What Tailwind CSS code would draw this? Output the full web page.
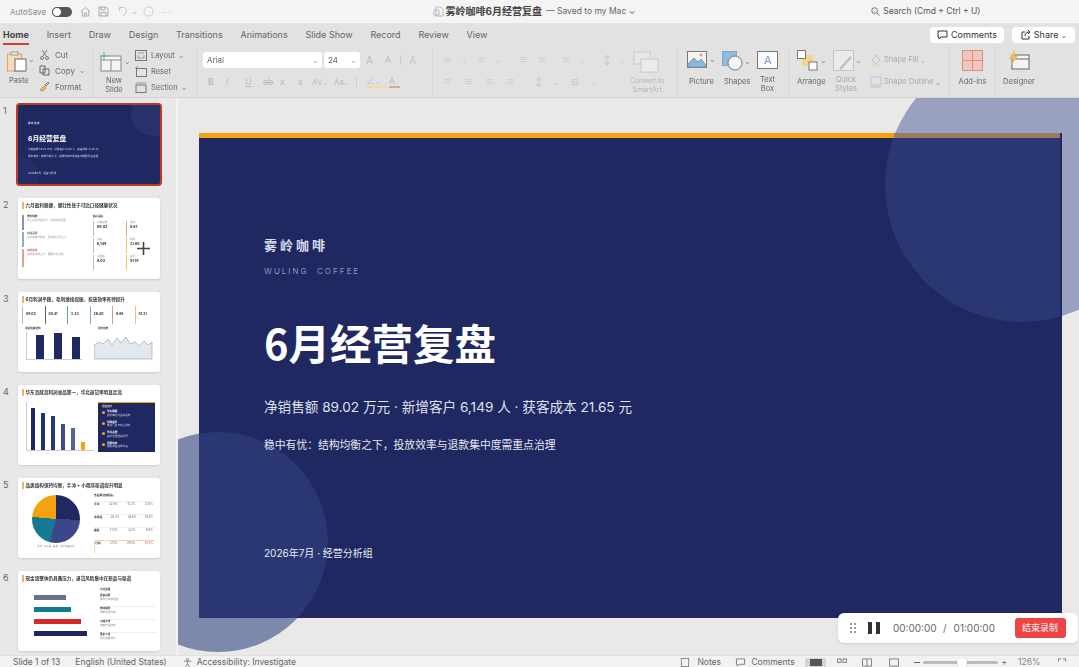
<!DOCTYPE html>
<html lang="zh-CN">
<head>
  <meta charset="UTF-8" />
  <title>雾岭咖啡6月经营复盘</title>
  <script src="https://cdn.jsdelivr.net/npm/@tailwindcss/browser@4"></script>
</head>
<body class="h-[667px] overflow-hidden bg-[#e9e9e8] text-[#444] [font-family:Inter,'Noto_Sans_CJK_SC',sans-serif]">

  <!-- Title bar -->
  <header class="h-[23px] bg-[#f4f4f4] flex items-center text-[9px] relative">
    <span class="ml-[10px] w-[42px] text-[#888] text-[8px]">AutoSave</span>
    <span class="w-[20px] h-[10px] rounded-full bg-[#555] relative"><span class="absolute left-0 top-0 w-[10px] h-[10px] rounded-full bg-white border border-[#555]"></span></span>
    <svg class="ml-[8px]" width="11" height="11" viewBox="0 0 12 12" fill="none" stroke="#aaa"><path d="M1 6 6 1.5 11 6M2.5 5v6h7V5M5 11V7.5h2V11"/></svg>
    <svg class="ml-[7px]" width="11" height="11" viewBox="0 0 11 11" fill="none" stroke="#aaa"><path d="M1 1h7l2 2v7H1zM3 1v3h4V1M3 10V6.5h5V10"/></svg>
    <svg class="ml-[9px]" width="11" height="11" viewBox="0 0 11 11" fill="none" stroke="#c4c4c4"><path d="M1 2c4-2 9 0 7 5l-3 3M1 2l1 3.5M1 2l3.5-.5"/></svg>
    <span class="ml-[3px] text-[#999] text-[6px]">⌄</span>
    <svg class="ml-[6px]" width="11" height="11" viewBox="0 0 11 11" fill="none" stroke="#ccc"><circle cx="5.5" cy="5.5" r="4.5"/><path d="M7 1.5 9 .5"/></svg>
    <span class="ml-[8px] text-[#aaa] tracking-[1px] text-[8px] leading-none">···</span>
    <div class="ml-[261px] flex items-center text-[#555]">
      <svg width="11" height="11" viewBox="0 0 11 11" fill="none" stroke="#bbb"><path d="M3 1h5l2 2v7H3zM1 4h5v5H1z"/></svg>
      <span class="ml-[2px] font-bold text-[#444] text-[10px]">雾岭咖啡6月经营复盘</span>
      <span class="ml-[4px] text-[8.5px] text-[#666]">— Saved to my Mac ⌄</span>
    </div>
    <div class="ml-[236px] flex items-center gap-[3px] text-[#555] text-[8.5px]">
      <svg width="9" height="9" viewBox="0 0 10 10" fill="none" stroke="#666"><circle cx="4" cy="4" r="3.2"/><path d="m6.5 6.5 3 3"/></svg>
      <span>Search (Cmd + Ctrl + U)</span>
    </div>
  </header>

  <!-- Tabs -->
  <nav class="h-[24px] bg-[#e2e2e2] flex items-center pl-[3px] pr-[4px] gap-[17.8px] text-[9px] text-[#666]">
    <span class="relative font-bold text-[#444]">Home<span class="absolute left-0 right-0 top-[15px] h-[2px] bg-[#c8442c]"></span></span>
    <span>Insert</span><span>Draw</span><span>Design</span><span>Transitions</span><span>Animations</span><span>Slide Show</span><span>Record</span><span>Review</span><span>View</span>
    <button class="ml-auto w-[74px] h-[16px] rounded-[4px] bg-white flex items-center justify-center gap-[3px] text-[#333] text-[9px]">
      <svg width="11" height="10" viewBox="0 0 11 10" fill="none" stroke="#333"><path d="M1 1h9v6H4L2 9V7H1z"/></svg>Comments
    </button>
    <button class="ml-[-9.8px] w-[63px] h-[16px] rounded-[4px] bg-white flex items-center justify-center gap-[3px] text-[#333] text-[9px]">
      <svg width="10" height="10" viewBox="0 0 10 10" fill="none" stroke="#333"><path d="M4 2H1v7h7V6M4 6c0-3 2-4 5-4M7 0l2 2-2 2"/></svg>Share <span class="text-[6px]">⌄</span>
    </button>
  </nav>

  <!-- Ribbon -->
  <section class="h-[51px] bg-[#e2e2e2] border-b border-[#d4d4d4] flex text-[7.5px] text-[#666] blur-[0.3px]">
    <!-- Clipboard -->
    <div class="w-[93px] border-r border-[#d6d6d6] flex pl-[7px] pt-[4px]">
      <div class="w-[32px] flex flex-col">
        <div class="flex items-start">
          <svg width="20" height="21" viewBox="0 0 20 21" fill="none"><rect x="0.5" y="3" width="14" height="17" fill="#f6dcb8" stroke="#d9a56a"/><rect x="8" y="8" width="11" height="12" fill="#fff" stroke="#666"/><rect x="4" y="1" width="7" height="3" fill="#eee" stroke="#999"/></svg>
          <span class="ml-[2px] mt-[4px] text-[6px]">⌄</span>
        </div>
        <span class="mt-[3px] ml-[2px]">Paste</span>
      </div>
      <div class="flex flex-col gap-[5px] -mt-[2px] text-[8px]">
        <div class="flex items-center gap-[5px] h-[11px]"><svg width="11" height="11" viewBox="0 0 11 11" fill="none" stroke="#777"><path d="M3 1l4 6M8 1 4 7"/><circle cx="3" cy="9" r="1.5"/><circle cx="8" cy="9" r="1.5"/></svg>Cut</div>
        <div class="flex items-center gap-[5px] h-[11px]"><svg width="11" height="11" viewBox="0 0 11 11" fill="none" stroke="#666"><path d="M1 1h5v7H1zM4 4h6v6H4z" /></svg>Copy <span class="text-[6px]">⌄</span></div>
        <div class="flex items-center gap-[5px] h-[11px]"><svg width="11" height="11" viewBox="0 0 11 11" fill="none"><path d="M1 9 5 5l2 2-3 3z" fill="#eeb877" stroke="#d58a3c"/><path d="m6 4 3-3 1 1-3 3z" stroke="#777"/></svg>Format</div>
      </div>
    </div>
    <!-- Slides -->
    <div class="w-[104px] border-r border-[#d6d6d6] flex pl-[7px] pt-[4px]">
      <div class="w-[35px] flex flex-col">
        <div class="flex items-start">
          <svg width="22" height="21" viewBox="0 0 22 21" fill="none" stroke="#888"><rect x="1" y="5" width="20" height="15" fill="#f4f4f4"/><path d="M1 9h20M11 9v11"/><path d="M4 1v8M0 5h8" stroke="#6fae7d"/></svg>
          <span class="ml-[3px] mt-[6px] text-[6px]">⌄</span>
        </div>
        <span class="mt-[5px] w-[28px] text-center leading-[8.5px]">New<br />Slide</span>
      </div>
      <div class="flex flex-col gap-[5px] -mt-[1px] text-[7.5px]">
        <div class="flex items-center gap-[4px] h-[11px]"><svg width="12" height="11" viewBox="0 0 12 11" fill="none" stroke="#777"><rect x="0.5" y="0.5" width="11" height="10" /><path d="M3 3h6M3 5v3h6V5" stroke="#999"/></svg>Layout <span class="text-[6px]">⌄</span></div>
        <div class="flex items-center gap-[4px] h-[11px]"><svg width="12" height="11" viewBox="0 0 12 11" fill="none" stroke="#777"><rect x="1.5" y="2.5" width="10" height="8"/><path d="M0 3 2 .5 4 3" stroke="#6fae7d"/></svg>Reset</div>
        <div class="flex items-center gap-[4px] h-[11px]"><svg width="12" height="11" viewBox="0 0 12 11" fill="none" stroke="#777"><rect x="1" y="3" width="10" height="7.5"/><path d="M1 1h10" stroke="#6fae7d" /></svg>Section <span class="text-[6px]">⌄</span></div>
      </div>
    </div>
    <!-- Font -->
    <div class="w-[236px] border-r border-[#d6d6d6] pl-[6px] pt-[5px] text-[#aaa]">
      <div class="flex items-center h-[16px]">
        <div class="w-[119px] h-[16px] bg-white rounded-[3px] flex items-center justify-between px-[4px] text-[#666] text-[8px]">Arial<span class="text-[6px] text-[#888]">⌄</span></div>
        <div class="ml-[2px] w-[36px] h-[16px] bg-white rounded-[3px] flex items-center justify-between px-[4px] text-[#666] text-[8px]">24<span class="text-[6px] text-[#888]">⌄</span></div>
        <span class="ml-[6px] text-[10px] text-[#bbb]">A</span>
        <span class="ml-[12px] text-[9px] text-[#bbb]">A</span>
        <span class="ml-[9px] w-px h-[10px] bg-[#ccc]"></span>
        <span class="ml-[8px] text-[10px] text-[#c4c4c4]">A</span>
      </div>
      <div class="mt-[7px] flex items-center h-[14px] text-[9px] text-[#bbb]">
        <span class="ml-[5px] w-[18px] font-bold">B</span>
        <span class="w-[19px] italic">I</span>
        <span class="w-[18px] underline">U</span>
        <span class="w-[17px] line-through">ab</span>
        <span class="w-[18px]">x</span>
        <span class="w-[14px]">x</span>
        <span class="w-[22px] text-[8px]">AV<span class="text-[6px]">⌄</span></span>
        <span class="w-[22px] text-[8px]">Aa<span class="text-[6px]">⌄</span></span>
        <span class="w-px h-[10px] bg-[#ccc]"></span>
        <span class="ml-[9px] w-[21px] border-b-2 border-[#f0dc9c] h-[12px] leading-[10px]">∠<span class="text-[6px]">⌄</span></span>
        <span class="ml-[2px] w-[11px] border-b-2 border-[#e4a0a0] h-[12px] leading-[10px]">A</span>
      </div>
    </div>
    <!-- Paragraph -->
    <div class="w-[245px] border-r border-[#d6d6d6] flex pl-[10px] pt-[6px] text-[#c0c0c0]">
      <div class="w-[188px]">
        <div class="flex items-center h-[14px] gap-[10px] text-[9px]">
          <span>≡</span><span class="text-[6px]">⌄</span><span>≡</span><span class="text-[6px]">⌄</span><span class="ml-[8px]">≡</span><span>≡</span><span class="ml-[5px]">≡</span><span class="text-[6px]">⌄</span><span class="ml-[8px]">↕</span><span class="text-[6px]">⌄</span>
        </div>
        <div class="mt-[8px] flex items-center h-[14px] gap-[12px] text-[9px]">
          <span>≡</span><span>≡</span><span>≡</span><span>≡</span><span class="ml-[8px]">↕</span><span class="text-[6px]">⌄</span><span>⊟</span><span class="text-[6px]">⌄</span>
        </div>
      </div>
      <div class="flex flex-col items-center w-[36px] -ml-[2px] -mt-[2px] text-[7px] text-[#b4b4b4]">
        <svg width="28" height="22" viewBox="0 0 28 22" fill="none" stroke="#c8c8c8"><rect x="1" y="1" width="16" height="12" fill="#e8e8e8"/><rect x="8" y="8" width="17" height="13" fill="#ececec"/></svg>
        <span class="mt-[4px] text-center leading-[8.5px] whitespace-nowrap">Convert to<br />SmartArt</span>
      </div>
    </div>
    <!-- Insert -->
    <div class="w-[111px] border-r border-[#d6d6d6] flex pl-[9px] pt-[4px]">
      <div class="w-[35px] flex flex-col">
        <div class="flex items-center gap-[3px]">
          <svg width="20" height="17" viewBox="0 0 20 17" fill="none" stroke="#777"><rect x="0.5" y="0.5" width="19" height="16" fill="#f4f4f4"/><path d="M1 13 7 7l4 4 3-3 5 6v2H1z" fill="#8cb8d8" stroke="#6a9cc0"/><circle cx="14" cy="4" r="1.4" fill="#e9967a" stroke="none"/></svg>
          <span class="text-[6px]">⌄</span>
        </div>
        <span class="mt-[8px] ml-[2px]">Picture</span>
      </div>
      <div class="w-[35px] flex flex-col">
        <div class="flex items-center gap-[2px]">
          <svg width="21" height="20" viewBox="0 0 21 20" fill="none"><rect x="0.5" y="0.5" width="14" height="14" fill="#8fbce0" stroke="#7aa8cc"/><circle cx="13" cy="12" r="7" fill="#f6f6f6" stroke="#777"/></svg>
          <span class="text-[6px]">⌄</span>
        </div>
        <span class="mt-[5px] ml-[2px]">Shapes</span>
      </div>
      <div class="flex flex-col">
        <svg width="21" height="18" viewBox="0 0 21 18" fill="none" stroke="#777"><rect x="0.5" y="0.5" width="20" height="17" fill="#fafafa"/><text x="7" y="13" fill="#6d9fc9" stroke="none" font-size="11">A</text></svg>
        <span class="mt-[7px] leading-[8.5px] text-center">Text<br />Box</span>
      </div>
    </div>
    <!-- Drawing -->
    <div class="w-[161px] border-r border-[#d6d6d6] flex pl-[8px] pt-[3px]">
      <div class="w-[36px] flex flex-col">
        <div class="flex items-center gap-[3px]">
          <svg width="21" height="21" viewBox="0 0 21 21" fill="none" stroke="#777"><rect x="5" y="5" width="11" height="11" fill="#f6d48c" stroke="none"/><rect x="0.5" y="0.5" width="8" height="8" fill="#fff"/><rect x="12" y="12" width="8" height="8" fill="#fff"/></svg>
          <span class="text-[6px]">⌄</span>
        </div>
        <span class="mt-[5px]">Arrange</span>
      </div>
      <div class="w-[37px] flex flex-col text-[#a8a8a8]">
        <div class="flex items-center gap-[2px]">
          <svg width="21" height="21" viewBox="0 0 21 21" fill="none" stroke="#c4c4c4"><rect x="0.5" y="0.5" width="20" height="20" fill="#ebebeb"/><path d="M7 19 18 7" stroke="#bbb" stroke-width="2"/></svg>
          <span class="text-[6px] text-[#777]">⌄</span>
        </div>
        <span class="mt-[5px] ml-[2px] leading-[8.5px] text-center w-[22px]">Quick<br />Styles</span>
      </div>
      <div class="flex flex-col gap-[10px] pt-[4px] text-[#a8a8a8]">
        <div class="flex items-center gap-[2px] h-[12px]"><svg width="12" height="12" viewBox="0 0 12 12" fill="none" stroke="#c4c4c4"><path d="M6 1 2 7l4 3 4-4z"/><path d="M1 11h10" stroke="#e8d0a0"/></svg>Shape Fill <span class="text-[6px]">⌄</span></div>
        <div class="flex items-center gap-[2px] h-[12px]"><svg width="12" height="12" viewBox="0 0 12 12" fill="none" stroke="#c4c4c4"><rect x="1" y="1" width="10" height="8"/><path d="M1 11h10" stroke="#b0c4dc"/></svg>Shape Outline <span class="text-[6px] text-[#777]">⌄</span></div>
      </div>
    </div>
    <!-- Add-ins -->
    <div class="w-[46px] border-r border-[#d6d6d6] flex flex-col items-center pt-[3px]">
      <svg width="21" height="21" viewBox="0 0 21 21" fill="#f2c8be" stroke="#e08f7f"><rect x="0.5" y="0.5" width="20" height="20"/><path d="M10.5 0v21M0 10.5h21" /></svg>
      <span class="mt-[5px]">Add-ins</span>
    </div>
    <!-- Designer -->
    <div class="w-[46px] flex flex-col items-center pt-[2px]">
      <svg width="22" height="22" viewBox="0 0 22 22" fill="none"><rect x="4" y="6" width="17" height="14" fill="#f4f4f4" stroke="#666"/><path d="M4 10h17" stroke="#666"/><path d="M7 0 1 10h4l-2 7 7-10H6z" fill="#f0bc5e"/></svg>
      <span class="mt-[5px]">Designer</span>
    </div>
  </section>

  <!-- Workspace -->
  <main class="h-[557px] flex overflow-hidden">
    <!-- Slide thumbnails -->
    <aside class="w-[178px] h-full shrink-0 bg-[#e8e8e8] border-r-[2px] border-[#f3f3f3] flex flex-col pt-[6px] gap-[13px] text-[#666] text-[9px]">
      <!-- 1 -->
      <div class="flex h-[81px]">
        <span class="w-[16px] pl-[3px]">1</span>
        <div class="relative w-[146px] h-[83px] -mt-[1px] rounded-[4px] border-[2px] border-[#bd3a22] bg-[#1f2860] overflow-hidden pl-[10px] pt-[17px] text-white blur-[0.3px]">
          <div class="absolute left-[113px] top-[-14px] w-[45px] h-[45px] rounded-full bg-[#28336e]"></div>
          <div class="absolute -left-[15px] bottom-[-10px] w-[36px] h-[36px] rounded-full bg-[#232e68]"></div>
          <div class="relative text-[2.5px] font-bold text-[#c8cee4] tracking-[0.5px]">雾岭咖啡</div>
          <div class="relative mt-[8px] text-[6.8px] leading-[9px] font-bold">6月经营复盘</div>
          <div class="relative mt-[4px] text-[2.6px] leading-[4px] text-[#d8dcec] whitespace-nowrap">净销售额 89.02 万元 · 新增客户 6,149 人 · 获客成本 21.65 元</div>
          <div class="relative mt-[3px] text-[2.6px] leading-[4px] text-[#d8dcec] whitespace-nowrap">稳中有忧：结构均衡之下，投放效率与退款集中度需重点治理</div>
          <div class="relative mt-[13px] text-[2.6px] leading-[4px] text-[#d8dcec]">2026年7月 · 经营分析组</div>
        </div>
      </div>
      <!-- 2 -->
      <div class="flex h-[80.5px]">
        <span class="w-[18px] pl-[3px]">2</span>
        <div class="relative w-[142px] h-[80.5px] rounded-[3px] bg-white shadow-sm overflow-hidden">
          <div class="blur-[0.3px]">
            <div class="flex items-center gap-[2px] pl-[4px] pt-[4px]"><span class="w-[1.5px] h-[7px] bg-[#f0b458]"></span><span class="text-[4.6px] leading-[7px] font-bold text-[#333]">六月盈利稳健，健壮性处于可比口径健康状况</span></div>
            <div class="flex pl-[4px] pt-[6px]">
              <div class="w-[65px] flex flex-col gap-[2px]">
                <div class="h-[15px] border-l-[2px] border-[#8d92b0] pl-[3px] text-[2.6px] text-[#999]"><b class="text-[#333]">增长结构</b><br />线上占比持续提升，投放效率回落</div>
                <div class="h-[15px] border-l-[2px] border-[#8ab0c8] pl-[3px] text-[2.6px] text-[#999]"><b class="text-[#3a6f94]">利润表现</b><br />毛利率维持稳定，费用率小幅上升</div>
                <div class="h-[18px] border-l-[2px] border-[#ea9c94] pl-[3px] text-[2.6px] text-[#999]"><b class="text-[#c84a3c]">风险信号</b><br />退款集中度上升，需要重点治理</div>
              </div>
              <div class="ml-[6px]">
                <div class="text-[2.6px] font-bold text-[#333]">核心指标</div>
                <div class="mt-[2px] grid grid-cols-[29px_29px] gap-x-[4px] gap-y-[2px] text-[2.6px] text-[#999]">
                  <div class="h-[15px] border-l-[1.5px] border-[#bbb] pl-[3px]">净销售额<br /><b class="text-[3.6px] text-[#333]">89.02</b></div>
                  <div class="h-[15px] border-l-[1.5px] border-[#ee9c94] pl-[3px]">退款<br /><b class="text-[3.6px] text-[#333]">8.61</b></div>
                  <div class="h-[15px] border-l-[1.5px] border-[#bbb] pl-[3px]">新客<br /><b class="text-[3.6px] text-[#333]">6,149</b></div>
                  <div class="h-[15px] border-l-[1.5px] border-[#f2c468] pl-[3px]">成本<br /><b class="text-[3.6px] text-[#333]">21.65</b></div>
                  <div class="h-[15px] border-l-[1.5px] border-[#bbb] pl-[3px]">复购率<br /><b class="text-[3.6px] text-[#333]">8.03</b></div>
                  <div class="h-[15px] border-l-[1.5px] border-[#f2c468] pl-[3px]">客单<br /><b class="text-[3.6px] text-[#333]">51.15</b></div>
                </div>
              </div>
            </div>
          </div>
          <svg class="absolute left-[119px] top-[44px]" width="13" height="13" viewBox="0 0 13 13" stroke="#444"><path d="M6.5 0v13M0 6.5h13" stroke-width="1.6"/></svg>
        </div>
      </div>
      <!-- 3 -->
      <div class="flex h-[80px]">
        <span class="w-[18px] pl-[3px]">3</span>
        <div class="w-[142px] h-[80px] rounded-[3px] bg-white shadow-sm overflow-hidden blur-[0.3px]">
          <div class="flex items-center gap-[2px] pl-[4px] pt-[4px]"><span class="w-[1.5px] h-[7px] bg-[#f0b458]"></span><span class="text-[4.6px] leading-[7px] font-bold text-[#333]">6月利润平稳，毛利继续提振，投放效率有待提升</span></div>
          <div class="flex gap-[2.5px] pl-[4px] pt-[3px] text-[3.4px] font-bold text-[#333]">
            <div class="w-[20px] h-[18px] border-l-[1.5px] border-[#bbb] pl-[3px] pt-[6px]">89.02</div>
            <div class="w-[20px] h-[18px] border-l-[1.5px] border-[#666] pl-[3px] pt-[6px]">58.41</div>
            <div class="w-[20px] h-[18px] border-l-[1.5px] border-[#5a9fac] pl-[3px] pt-[6px]">2.33</div>
            <div class="w-[20px] h-[18px] border-l-[1.5px] border-[#7fb0c4] pl-[3px] pt-[6px]">26.40</div>
            <div class="w-[20px] h-[18px] border-l-[1.5px] border-[#ee908a] pl-[3px] pt-[6px]">6.68</div>
            <div class="w-[20px] h-[18px] border-l-[1.5px] border-[#f0c26c] pl-[3px] pt-[6px]">51.21</div>
          </div>
          <div class="flex pl-[7px] pt-[2px] text-[2.6px] font-bold text-[#444] leading-[4px]">
            <div class="w-[60px]">净销售额结构</div>
            <div class="ml-[13px]">周度趋势</div>
          </div>
          <div class="flex pl-[8px] pt-[2px]">
            <div class="w-[56px] h-[28px] border-l border-b border-[#ccc] flex items-end pl-[9px] gap-[10px]">
              <span class="w-[8px] h-[24px] bg-[#1f2860]"></span><span class="w-[8px] h-[26px] bg-[#1f2860]"></span><span class="w-[8px] h-[22px] bg-[#1f2860]"></span>
            </div>
            <svg class="ml-[12px]" width="62" height="28" viewBox="0 0 62 28"><path d="M0 27V13l5-3 4 2 5-5 4 6 5-7 4 5 5-6 4 7 5-2 4 4 5-5 4 4 4-3v17z" fill="#e3e7ee" stroke="#8e9ab4" stroke-width="0.6"/></svg>
          </div>
        </div>
      </div>
      <!-- 4 -->
      <div class="flex h-[80px]">
        <span class="w-[18px] pl-[3px]">4</span>
        <div class="w-[142px] h-[80px] rounded-[3px] bg-white shadow-sm overflow-hidden blur-[0.3px]">
          <div class="flex items-center gap-[2px] pl-[4px] pt-[4px]"><span class="w-[1.5px] h-[7px] bg-[#f0b458]"></span><span class="text-[4.6px] leading-[7px] font-bold text-[#333]">华东贡献高利润单品第一，华北退货率明显走高</span></div>
          <div class="flex pt-[6px]">
            <div class="ml-[8px] w-[68px] h-[49px] border-l border-b border-[#ccc] flex items-end pl-[4px] gap-[6px]">
              <span class="w-[4px] h-[42px] bg-[#1f2860]"></span><span class="w-[4px] h-[37px] bg-[#25306c]"></span><span class="w-[4px] h-[34px] bg-[#2c3876]"></span><span class="w-[4px] h-[26px] bg-[#3d4a8c]"></span><span class="w-[4px] h-[22px] bg-[#5361a0]"></span><span class="w-[4px] h-[8px] bg-[#f4a30f]"></span>
            </div>
            <div class="ml-[4px] w-[57px] h-[50px] bg-[#1f2860] border-t border-[#f4a30f] pl-[4px] pt-[2px] text-[2.6px] leading-[3.5px] text-[#ccd2e8]">
              <div class="mb-[2px] text-white">经营启示</div>
              <div class="flex gap-[2px] mb-[3.5px]"><span class="w-[3px] h-[3px] mt-[1px] shrink-0 rounded-full bg-[#f4a30f]"></span><span><b class="text-white">华东稳健</b><br />保持高毛利品类投放</span></div>
              <div class="flex gap-[2px] mb-[3.5px]"><span class="w-[3px] h-[3px] mt-[1px] shrink-0 rounded-full bg-[#f4a30f]"></span><span><b class="text-white">华南提升</b><br />推进门店与线上联动</span></div>
              <div class="flex gap-[2px] mb-[3.5px]"><span class="w-[3px] h-[3px] mt-[1px] shrink-0 rounded-full bg-[#f4a30f]"></span><span><b class="text-white">华北治理</b><br />集中处理退款问题</span></div>
              <div class="flex gap-[2px]"><span class="w-[3px] h-[3px] mt-[1px] shrink-0 rounded-full bg-[#f4a30f]"></span><span><b class="text-white">西南培育</b><br />控制获客投放节奏</span></div>
            </div>
          </div>
        </div>
      </div>
      <!-- 5 -->
      <div class="flex h-[80px]">
        <span class="w-[18px] pl-[3px]">5</span>
        <div class="w-[142px] h-[80px] rounded-[3px] bg-white shadow-sm overflow-hidden blur-[0.3px]">
          <div class="flex items-center gap-[2px] pl-[4px] pt-[4px]"><span class="w-[1.5px] h-[7px] bg-[#f0b458]"></span><span class="text-[4.6px] leading-[7px] font-bold text-[#333]">品类结构保持均衡，手冲 + 小程序渠道提升明显</span></div>
          <div class="flex pt-[6px]">
            <div class="ml-[14px] w-[48px]">
              <div class="w-[48px] h-[48px] rounded-full bg-[conic-gradient(#1f2860_0deg_92deg,#3a4888_92deg_195deg,#157a91_195deg_275deg,#f4a30f_275deg_360deg)]"></div>
              <div class="mt-[2px] text-[2.4px] text-[#888] text-center whitespace-nowrap">手冲 · 冷萃瓶 · 器具 · 订阅 销售占比</div>
            </div>
            <div class="ml-[14px] w-[61px] text-[2.8px] text-[#666] -mt-[2px]">
              <div class="font-bold text-[#333] mb-[4px]">各品类经营指标</div>
              <div class="h-[13px] border-t border-[#eee] flex justify-between pr-[2px]"><b class="text-[#333]">手冲</b><span>32.8%</span><span>41.2%</span><span>12.6%</span></div>
              <div class="h-[13px] border-t border-[#eee] flex justify-between pr-[2px]"><b class="text-[#333]">冷萃瓶</b><span>28.4%</span><span>38.6%</span><span>10.4%</span></div>
              <div class="h-[13px] border-t border-[#eee] flex justify-between pr-[2px]"><b class="text-[#333]">器具</b><span>21.5%</span><span>33.1%</span><span>8.9%</span></div>
              <div class="h-[13px] border-t border-l-[1px] border-[#f4d6a8] flex justify-between pr-[2px]"><b class="text-[#333]">订阅</b><span>17.3%</span><span>29.5%</span><span class="text-[#d03030]">15.2%</span></div>
            </div>
          </div>
        </div>
      </div>
      <!-- 6 -->
      <div class="flex h-[80px]">
        <span class="w-[18px] pl-[3px]">6</span>
        <div class="w-[142px] h-[80px] rounded-[3px] bg-white shadow-sm overflow-hidden blur-[0.3px]">
          <div class="flex items-center gap-[2px] pl-[4px] pt-[4px]"><span class="w-[1.5px] h-[7px] bg-[#f0b458]"></span><span class="text-[4.6px] leading-[7px] font-bold text-[#333]">现金流整体仍具备压力，退货风险集中在新品与渠道</span></div>
          <div class="flex pt-[13px]">
            <div class="ml-[16px] w-[62px] flex flex-col gap-[7px]">
              <span class="block w-[32px] h-[5px] bg-[#6b7285]"></span>
              <span class="block w-[37px] h-[5px] bg-[#127a8f]"></span>
              <span class="block w-[47px] h-[5px] bg-[#d42a2a]"></span>
              <span class="block w-[53px] h-[5px] bg-[#1d2660]"></span>
            </div>
            <div class="ml-[4px] w-[56px] -mt-[7px] text-[2.6px] leading-[3.5px] text-[#888]">
              <div class="font-bold text-[#333] mb-[3px]">专项复盘</div>
              <div class="h-[13px] border-b border-[#eee]"><b class="text-[#333]">质量问题</b><br />需优化来料检验</div>
              <div class="h-[13px] border-b border-[#eee]"><b class="text-[#333]">物流破损</b><br />调整包装方案</div>
              <div class="h-[13px] border-b border-[#eee]"><b class="text-[#333]">口味不符</b><br />完善产品描述</div>
              <div class="h-[13px]"><b class="text-[#333]">重复下单</b><br />优化结算提示</div>
            </div>
          </div>
        </div>
      </div>
    </aside>

    <!-- Slide canvas -->
    <div class="relative flex-1 overflow-hidden pl-[21px] pt-[35px] h-[555px]">
      <div class="absolute left-[707px] top-[-50px] w-[274px] h-[274px] rounded-full bg-[#9aa0c0]"></div>
      <div class="absolute left-[-70px] top-[334px] w-[220px] h-[220px] rounded-full bg-[#7d88ad]"></div>
      <div class="relative w-[863px] h-[485px] bg-[#1f2860] pr-[2px]">
        <div class="relative w-[861px] h-[485px] overflow-hidden pl-[65px] pt-[104px] text-white [font-family:Inter,'Noto_Sans_CJK_SC',sans-serif]">
          <div class="absolute left-[-91px] top-[299px] w-[220px] h-[220px] rounded-full bg-[#2b3772]"></div>
          <div class="absolute left-[686px] top-[-85px] w-[274px] h-[274px] rounded-full bg-[#2b3772]"></div>
          <div class="absolute left-0 top-0 w-[695px] h-[5px] bg-[#f4a30f]"></div>
          <div class="absolute left-[695px] top-0 right-0 h-[5px] bg-[#a07a60]"></div>
          <div class="relative h-[17px] leading-[17px] text-[13px] font-bold tracking-[3px] text-[#d8dcee]">雾岭咖啡</div>
          <div class="relative mt-[12px] h-[10px] leading-[10px] text-[8px] tracking-[2px] text-[#8f97bd]">WULING&nbsp; COFFEE</div>
          <div class="relative mt-[39px] h-[54px] leading-[54px] text-[41.5px] font-bold [font-family:'Noto_Sans_CJK_SC',sans-serif]">6月经营复盘</div>
          <div class="relative mt-[28px] h-[20px] leading-[20px] text-[13.6px] text-[#dfe3ef] whitespace-nowrap">净销售额 89.02 万元 · 新增客户 6,149 人 · 获客成本 21.65 元</div>
          <div class="relative mt-[20px] h-[18px] leading-[18px] text-[10.8px] text-[#e6e8f2] whitespace-nowrap">稳中有忧：结构均衡之下，投放效率与退款集中度需重点治理</div>
          <div class="relative mt-[90px] h-[16px] leading-[16px] text-[10px] text-[#e6e8f2]">2026年7月 · 经营分析组</div>
        </div>
      </div>
    </div>
  </main>

  <!-- Status bar -->
  <footer class="h-[12px] bg-[#f2f2f2] border-t border-[#e0e0e0] flex items-start pt-[2px] text-[8.5px] leading-[9px] text-[#666] overflow-hidden">
    <span class="ml-[13px]">Slide 1 of 13</span>
    <span class="ml-[15px]">English (United States)</span>
    <span class="ml-[15px] flex items-center gap-[4px]">
      <svg width="11" height="9" viewBox="0 0 11 11" fill="none" stroke="#777"><circle cx="5.5" cy="2" r="1.4"/><path d="M1 4h9M5.5 4v3M3 11l2.5-4L8 11"/></svg>
      Accessibility: Investigate
    </span>
    <span class="ml-auto flex items-center">
      <svg width="10" height="9" viewBox="0 0 10 11" fill="none" stroke="#777"><rect x="0.5" y="0.5" width="9" height="10"/></svg>
      <span class="ml-[7px] w-[38px]">Notes</span>
      <svg width="11" height="9" viewBox="0 0 11 10" fill="none" stroke="#777"><path d="M1 1h9v6H4L2 9V7H1z"/></svg>
      <span class="ml-[5px] w-[54px]">Comments</span>
      <span class="w-[21px] h-[9px] bg-[#d4d4d4] rounded-t-[2px] flex items-center justify-center"><span class="w-[12px] h-[7px] bg-[#555]"></span></span>
      <svg class="ml-[10px]" width="12" height="9" viewBox="0 0 12 10" fill="none" stroke="#777"><path d="M1 1h4v4H1zM7 1h4v4H7z"/></svg>
      <svg class="ml-[13px]" width="12" height="9" viewBox="0 0 12 10" fill="none" stroke="#777"><path d="M1 1h10v8H1zM6 1v8"/></svg>
      <svg class="ml-[15px]" width="12" height="9" viewBox="0 0 12 10" fill="none" stroke="#777"><path d="M1 1h10v8H1z"/></svg>
      <span class="ml-[14px] mr-[3px] w-[6px] h-px bg-[#666]"></span>
      <span class="relative w-[75px] h-[3px] rounded-full bg-[#bbb]"><span class="absolute left-[34px] -top-[3px] w-[10px] h-[10px] rounded-full bg-white shadow"></span></span>
      <span class="ml-[3px]">+</span>
      <span class="ml-[11px] w-[38px] text-[#888]">126%</span>
      <svg class="mr-[11px]" width="12" height="9" viewBox="0 0 10 10" fill="none" stroke="#777"><path d="M1 4V1h3M9 4V1H6"/></svg>
    </span>
  </footer>

  <!-- Recording widget -->
  <div class="absolute left-[838px] top-[613px] w-[240px] h-[30px] rounded-[6px] bg-white shadow flex items-center pl-[12px] text-[10px] text-[#666]">
    <svg width="6" height="10" viewBox="0 0 6 10" fill="#777"><circle cx="1" cy="1" r="1"/><circle cx="5" cy="1" r="1"/><circle cx="1" cy="5" r="1"/><circle cx="5" cy="5" r="1"/><circle cx="1" cy="9" r="1"/><circle cx="5" cy="9" r="1"/></svg>
    <span class="ml-[12px] w-[4px] h-[12px] bg-[#333]"></span>
    <span class="ml-[4px] w-[4px] h-[12px] bg-[#333]"></span>
    <span class="ml-[13px] w-[45px]">00:00:00</span>
    <span class="ml-[5px]">/</span>
    <span class="ml-[7px] w-[45px]">01:00:00</span>
    <button class="ml-[16px] w-[51px] h-[20px] rounded-[3px] bg-[#ef4444] text-white text-[9px]">结束录制</button>
  </div>

</body>
</html>
